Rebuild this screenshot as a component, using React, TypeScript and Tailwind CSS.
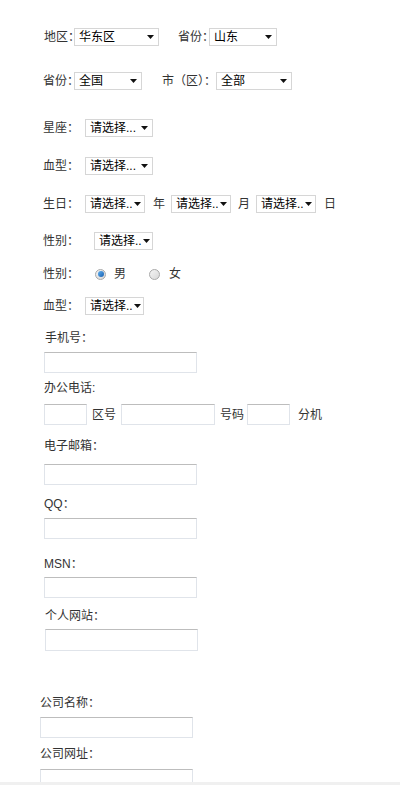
import React from "react";

const font = { fontFamily: '"Liberation Sans", "Noto Sans CJK SC", sans-serif' };

function Arrow() {
  return (
    <svg width="7" height="4" viewBox="0 0 7 4" className="shrink-0">
      <path d="M0 0 H7 L3.5 4 Z" fill="#111" />
    </svg>
  );
}

function Sel({ w, text }: { w: number; text: string }) {
  return (
    <div
      className="h-[18px] shrink-0 bg-white border border-[#d6d6d6] flex items-center justify-between gap-[1px] pl-[4px] pr-[4px] text-[12px] text-black leading-none"
      style={{ width: w }}
    >
      <span className="whitespace-nowrap">{text}</span>
      <Arrow />
    </div>
  );
}

function Label({ w, children }: { w: number; children: React.ReactNode }) {
  return (
    <span className="shrink-0 whitespace-nowrap text-[12px] text-[#333] leading-none" style={{ width: w }}>
      {children}
    </span>
  );
}

function Input({ w, h = 21 }: { w: number; h?: number }) {
  return (
    <div
      className="shrink-0 bg-white border border-[#e0e4ea] border-t-[#bdbdbd]"
      style={{ width: w, height: h }}
    />
  );
}

function Radio({ checked }: { checked?: boolean }) {
  return (
    <span className="w-[11px] h-[11px] rounded-full border border-[#a9a9a9] bg-gradient-to-br from-[#f4f4f4] to-[#d8d8d8] flex items-center justify-center shrink-0">
      {checked && <span className="w-[6px] h-[6px] rounded-full bg-gradient-to-br from-[#5fb0f0] to-[#1860b0]" />}
    </span>
  );
}

export default function App() {
  return (
    <div className="w-[400px] h-[785px] bg-white overflow-hidden relative" style={font}>
      <div className="flex flex-col">
        <div className="mt-[28px] h-[18px] flex items-center pl-[44px]">
          <Label w={30}>地区：</Label>
          <Sel w={85} text="华东区" />
          <span className="w-[19px] shrink-0" />
          <Label w={31}>省份：</Label>
          <Sel w={68} text="山东" />
        </div>
        <div className="mt-[26px] h-[18px] flex items-center pl-[43px]">
          <Label w={31}>省份：</Label>
          <Sel w={68} text="全国" />
          <span className="w-[20px] shrink-0" />
          <Label w={54}>市（区）：</Label>
          <Sel w={76} text="全部" />
        </div>
        <div className="mt-[29px] h-[18px] flex items-center pl-[43px]">
          <Label w={42}>星座：</Label>
          <Sel w={68} text="请选择..." />
        </div>
        <div className="mt-[20px] h-[18px] flex items-center pl-[43px]">
          <Label w={42}>血型：</Label>
          <Sel w={68} text="请选择..." />
        </div>
        <div className="mt-[20px] h-[18px] flex items-center pl-[43px]">
          <Label w={42}>生日：</Label>
          <Sel w={60} text="请选择.." />
          <span className="ml-[8px] w-[18px] shrink-0 text-[12px] text-[#333]">年</span>
          <Sel w={60} text="请选择.." />
          <span className="ml-[7px] w-[18px] shrink-0 text-[12px] text-[#333]">月</span>
          <Sel w={60} text="请选择.." />
          <span className="ml-[8px] shrink-0 text-[12px] text-[#333]">日</span>
        </div>
        <div className="mt-[19px] h-[18px] flex items-center pl-[43px]">
          <Label w={51}>性别：</Label>
          <Sel w={59} text="请选择.." />
        </div>
        <div className="mt-[15px] h-[18px] flex items-center pl-[43px]">
          <Label w={52}>性别：</Label>
          <Radio checked />
          <span className="ml-[8px] w-[35px] text-[12px] text-[#333]">男</span>
          <Radio />
          <span className="ml-[9px] text-[12px] text-[#333]">女</span>
        </div>
        <div className="mt-[14px] h-[18px] flex items-center pl-[43px]">
          <Label w={42}>血型：</Label>
          <Sel w={59} text="请选择.." />
        </div>
        <div className="mt-[15px] h-[16px] flex items-center pl-[45px]">
          <Label w={60}>手机号：</Label>
        </div>
        <div className="mt-[6px] pl-[44px] flex">
          <Input w={153} />
        </div>
        <div className="mt-[7px] h-[16px] flex items-center pl-[44px]">
          <Label w={60}>办公电话:</Label>
        </div>
        <div className="mt-[8px] pl-[44px] flex items-center">
          <Input w={43} />
          <span className="ml-[5px] w-[29px] shrink-0 text-[12px] text-[#333]">区号</span>
          <Input w={94} />
          <span className="ml-[5px] w-[27px] shrink-0 text-[12px] text-[#333]">号码</span>
          <Input w={43} />
          <span className="ml-[8px] shrink-0 text-[12px] text-[#333]">分机</span>
        </div>
        <div className="mt-[13px] h-[16px] flex items-center pl-[44px]">
          <Label w={70}>电子邮箱：</Label>
        </div>
        <div className="mt-[10px] pl-[44px] flex">
          <Input w={153} />
        </div>
        <div className="mt-[11px] h-[16px] flex items-center pl-[44px]">
          <Label w={40}>QQ：</Label>
        </div>
        <div className="mt-[6px] pl-[44px] flex">
          <Input w={153} />
        </div>
        <div className="mt-[17px] h-[16px] flex items-center pl-[44px]">
          <Label w={50}>MSN：</Label>
        </div>
        <div className="mt-[5px] pl-[44px] flex">
          <Input w={153} />
        </div>
        <div className="mt-[10px] h-[16px] flex items-center pl-[45px]">
          <Label w={70}>个人网站：</Label>
        </div>
        <div className="mt-[5px] pl-[45px] flex">
          <Input w={153} h={22} />
        </div>
        <div className="mt-[44px] h-[16px] flex items-center pl-[40px]">
          <Label w={70}>公司名称：</Label>
        </div>
        <div className="mt-[6px] pl-[40px] flex">
          <Input w={153} />
        </div>
        <div className="mt-[8px] h-[16px] flex items-center pl-[40px]">
          <Label w={70}>公司网址：</Label>
        </div>
        <div className="mt-[7px] pl-[40px] flex">
          <Input w={153} />
        </div>
      </div>
      <div className="absolute left-0 right-0 bottom-0 h-[3px] bg-[#f0f0f0]" />
    </div>
  );
}
